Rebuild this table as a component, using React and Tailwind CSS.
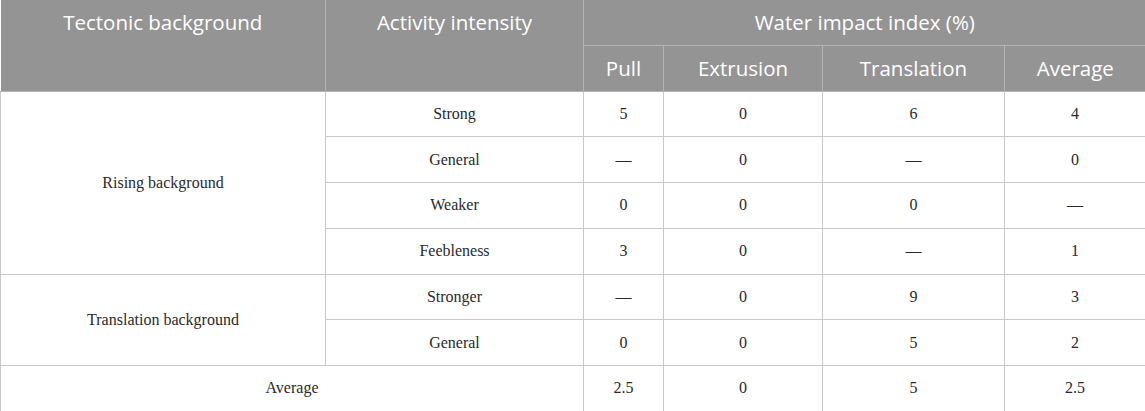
const rows = [
  { group: 'Rising background', span: 4, intensity: 'Strong', vals: ['5', '0', '6', '4'] },
  { intensity: 'General', vals: ['—', '0', '—', '0'] },
  { intensity: 'Weaker', vals: ['0', '0', '0', '—'] },
  { intensity: 'Feebleness', vals: ['3', '0', '—', '1'] },
  { group: 'Translation background', span: 2, intensity: 'Stronger', vals: ['—', '0', '9', '3'] },
  { intensity: 'General', vals: ['0', '0', '5', '2'] },
];

const th = 'border border-[#b4b4b4] font-normal text-white text-[20.5px] leading-[30px] align-middle p-0';
const td = 'border border-[#c9c9c9] text-center align-middle h-[45.75px] p-0';

export default function App() {
  return (
    <div className="w-[1145px] h-[411px] overflow-hidden bg-white">
      <table
        className="w-[1145px] table-fixed border-collapse"
        style={{ fontFamily: '"Open Sans", "Liberation Sans", sans-serif' }}
      >
        <colgroup>
          <col className="w-[325px]" />
          <col className="w-[258px]" />
          <col className="w-[80px]" />
          <col className="w-[159px]" />
          <col className="w-[182px]" />
          <col className="w-[141px]" />
        </colgroup>
        <thead className="bg-[#949494]">
          <tr className="h-[45px]">
            <th rowSpan={2} className={`${th} !align-top pt-[7px] border-l-0 border-t-0`}>Tectonic background</th>
            <th rowSpan={2} className={`${th} !align-top pt-[7px] border-t-0`}>Activity intensity</th>
            <th colSpan={4} className={`${th} border-t-0 border-r-0`}>Water impact index (%)</th>
          </tr>
          <tr className="h-[46px]">
            <th className={th}>Pull</th>
            <th className={th}>Extrusion</th>
            <th className={th}>Translation</th>
            <th className={`${th} border-r-0`}>Average</th>
          </tr>
        </thead>
        <tbody
          className="text-[16px] text-[#2a2a2a]"
          style={{ fontFamily: '"Liberation Serif", "DejaVu Serif", serif' }}
        >
          {rows.map((r, i) => (
            <tr key={i}>
              {r.group && (
                <td rowSpan={r.span} className={td}>{r.group}</td>
              )}
              <td className={td}>{r.intensity}</td>
              {r.vals.map((v, j) => (
                <td key={j} className={td}>{v}</td>
              ))}
            </tr>
          ))}
          <tr>
            <td colSpan={2} className={td}>Average</td>
            <td className={td}>2.5</td>
            <td className={td}>0</td>
            <td className={td}>5</td>
            <td className={td}>2.5</td>
          </tr>
        </tbody>
      </table>
    </div>
  );
}
